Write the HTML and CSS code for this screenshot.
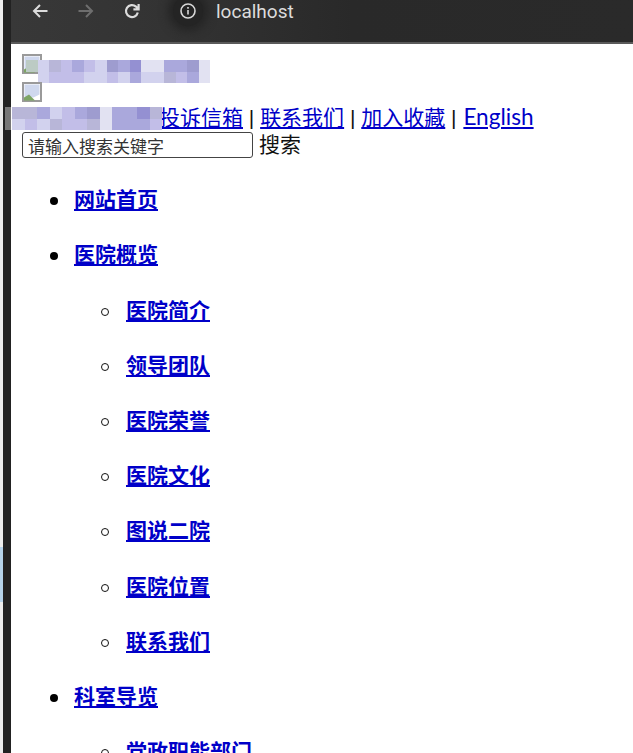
FILE: index.html
```html
<!DOCTYPE html>
<html lang="zh-CN">
<head>
  <meta charset="UTF-8">
  <title>localhost</title>
  <link rel="stylesheet" href="styles.css">
</head>
<body>
  <div class="window-edge">
    <div class="edge-light">
      <div class="edge-blue"></div>
    </div>
    <div class="edge-dark">
      <div class="edge-grey"></div>
    </div>
  </div>

  <div class="window">
    <div class="toolbar">
      <svg class="tool-icon" viewBox="0 0 16 16"><path d="M15.5 8H2M8 2L2 8l6 6"/></svg>
      <svg class="tool-icon tool-off" viewBox="0 0 16 16"><path d="M.5 8H14M8 2l6 6-6 6"/></svg>
      <svg class="tool-icon tool-reload" viewBox="0 0 16 16"><path d="M13.8 9.5A6 6 0 1 1 12 3.6L14 5.8M14.6 1V6.4H9.4"/></svg>
      <span class="site-info">
        <svg class="info-icon" viewBox="0 0 16 16"><circle cx="8" cy="8" r="7"/><path d="M8 7v4.5M8 4v1.8"/></svg>
      </span>
      <span class="address">localhost</span>
    </div>

    <div class="page">
      <div class="logo-row">
        <svg class="broken-img" viewBox="0 0 20 20"><path class="img-page" d="M1 1h18v18H1z"/><path class="img-sky" d="M2.5 2.5h15v10l-6 3h-9z"/><path class="img-hill" d="M2 18.5v-3l5-3 6 6z"/></svg>
        <div class="mosaic mosaic-logo">
          <i class="sg"></i><i class="s1"></i><i class="s3"></i><i class="s2"></i><i class="s4"></i><i class="s2"></i><i class="s1"></i><i class="s5"></i><i class="s4"></i><i class="s6"></i><i class="s0"></i><i class="s0"></i><i class="s4"></i><i class="s4"></i><i class="s5"></i><i class="s0"></i>
          <i></i><i class="s1"></i><i class="s2"></i><i class="s2"></i><i class="s2"></i><i class="s1"></i><i class="s1"></i><i class="s2"></i><i class="s1"></i><i class="s4"></i><i class="s1"></i><i class="s1"></i><i class="s3"></i><i class="s2"></i><i class="s4"></i><i class="s0"></i>
        </div>
      </div>
      <div class="logo-row logo-second">
        <svg class="broken-img" viewBox="0 0 20 20"><path class="img-page" d="M1 1h18v18H1z"/><path class="img-sky" d="M2.5 2.5h15v10l-6 3h-9z"/><path class="img-hill" d="M2 18.5v-3l5-3 6 6z"/></svg>
      </div>

      <div class="top-links">
        <div class="mosaic mosaic-links">
          <i class="s3"></i><i class="s3"></i><i class="s4"></i><i class="s1"></i><i class="s2"></i><i class="s4"></i><i class="s5"></i><i class="s0"></i><i class="s4"></i><i class="s4"></i><i class="s6"></i><i class="s3"></i>
          <i class="s1"></i><i class="s2"></i><i class="s1"></i><i class="s3"></i><i class="s2"></i><i class="s2"></i><i class="s3"></i><i class="s0"></i><i class="s4"></i><i class="s4"></i><i class="s4"></i><i class="s2"></i>
        </div><a href="#">投诉信箱</a> | <a href="#">联系我们</a> | <a href="#">加入收藏</a> | <a href="#" class="lang-link">English</a>
      </div>

      <div class="search-row">
        <input type="text" class="search-input" placeholder="请输入搜索关键字">
        <span>搜索</span>
      </div>

      <ul class="nav">
        <li><h3><a href="#">网站首页</a></h3></li>
        <li>
          <h3><a href="#">医院概览</a></h3>
          <ul>
            <li><h3><a href="#">医院简介</a></h3></li>
            <li><h3><a href="#">领导团队</a></h3></li>
            <li><h3><a href="#">医院荣誉</a></h3></li>
            <li><h3><a href="#">医院文化</a></h3></li>
            <li><h3><a href="#">图说二院</a></h3></li>
            <li><h3><a href="#">医院位置</a></h3></li>
            <li><h3><a href="#">联系我们</a></h3></li>
          </ul>
        </li>
        <li>
          <h3><a href="#">科室导览</a></h3>
          <ul>
            <li><h3><a href="#">党政职能部门</a></h3></li>
          </ul>
        </li>
      </ul>
    </div>
  </div>
</body>
</html>
```

FILE: styles.css
```css
html, body {
  margin: 0;
  padding: 0;
  height: 753px;
  overflow: hidden;
}

body {
  display: flex;
  font-family: "Liberation Sans", "Noto Sans CJK SC", sans-serif;
  font-size: 21px;
  background-color: #fff;
  color: #111;
}

/* left edge of the captured window */
.window-edge {
  display: flex;
  flex: 0 0 11px;
}

.edge-light {
  flex: 0 0 3px;
  padding-top: 547px;
  background-color: #ececec;
}

.edge-blue {
  height: 55px;
  background-color: #b5d3ea;
}

.edge-dark {
  flex: 1;
  padding-top: 107px;
  background-color: #222;
}

.edge-grey {
  height: 23px;
  margin-left: 2px;
  background-color: #777;
}

.window {
  flex: 1;
  min-width: 0;
}

.toolbar {
  display: flex;
  align-items: center;
  height: 44px;
  padding-left: 21px;
  padding-bottom: 20px;
  box-sizing: border-box;
  background: linear-gradient(to right, #383838, #333 25%, #292929 55%, #2a2a2a);
  border-bottom: 2px solid #5a5a5a;
  color: #ddd;
}

.tool-icon {
  width: 16px;
  height: 16px;
  margin-right: 30px;
  fill: none;
  stroke: #dcdcdc;
  stroke-width: 2;
}

.tool-off {
  stroke: #6e6e6e;
}

.tool-reload {
  stroke-width: 2.2;
}

.site-info {
  display: flex;
  align-items: center;
  justify-content: center;
  width: 30px;
  height: 30px;
  margin-left: 3px;
  border-radius: 50%;
  background-color: #242424;
  box-shadow: 0 0 10px 5px #242424;
}

.info-icon {
  width: 16px;
  height: 16px;
  fill: none;
  stroke: #d8d8d8;
  stroke-width: 1.6;
}

.address {
  margin-left: 13px;
  font-family: "Roboto", sans-serif;
  font-size: 19px;
  color: #dcdcdc;
}

.page {
  padding: 10px 11px 0;
}

.logo-row {
  display: flex;
  height: 28px;
}

.logo-second {
  height: 23px;
}

.broken-img {
  flex: none;
  width: 20px;
  height: 20px;
}

.img-page {
  fill: #fff;
  stroke: #9a9a9a;
  stroke-width: 2;
}

.img-sky {
  fill: #cfd8ee;
}

.img-hill {
  fill: #7da565;
}

.mosaic {
  display: grid;
  grid-template-columns: repeat(16, 11.5px);
  grid-auto-rows: 11.5px;
}

.mosaic-logo {
  margin: 6px 0 0 -16px;
}

.mosaic-links {
  display: inline-grid;
  grid-template-columns: repeat(12, 12.5px);
  vertical-align: bottom;
  position: relative;
  margin: 0 -3px 0 -10px;
}

.s0 { background-color: #e2e2f2; }
.s1 { background-color: #d2d2ee; }
.s2 { background-color: #c2bee8; }
.s3 { background-color: #b8b6d8; }
.s4 { background-color: #aaa8dc; }
.s5 { background-color: #9e9ccf; }
.s6 { background-color: #9490d2; }
.sg { background-color: #bccbc4; }

.top-links {
  height: 27px;
  line-height: 24px;
  white-space: nowrap;
}

.lang-link {
  margin-left: 1px;
  font-family: "Lato", sans-serif;
  font-size: 22.6px;
}

.search-row {
  display: flex;
  align-items: flex-start;
  gap: 6px;
  height: 25px;
  line-height: 26px;
}

.search-input {
  flex: none;
  width: 231px;
  height: 26px;
  padding: 0 5px;
  box-sizing: border-box;
  border: 1px solid #444;
  border-radius: 3px;
  font-family: "Noto Sans CJK SC", sans-serif;
  font-size: 17px;
}

.search-input::placeholder {
  color: #333;
  opacity: 1;
}

.nav, .nav ul {
  margin: 0;
  padding-left: 52px;
  list-style: none;
}

.nav h3 {
  position: relative;
  margin: 31.2px 0;
  font-size: 21px;
  line-height: 24px;
}

/* bullets: larger than the browser's own at this size */
.nav h3::before {
  content: "";
  position: absolute;
  left: -24px;
  top: 9px;
  width: 8px;
  height: 8px;
  border-radius: 50%;
  background-color: #000;
}

.nav ul h3::before {
  left: -25px;
  box-sizing: border-box;
  border: 1.5px solid #111;
  background-color: #fff;
}

a {
  color: #0000c8;
}
```
